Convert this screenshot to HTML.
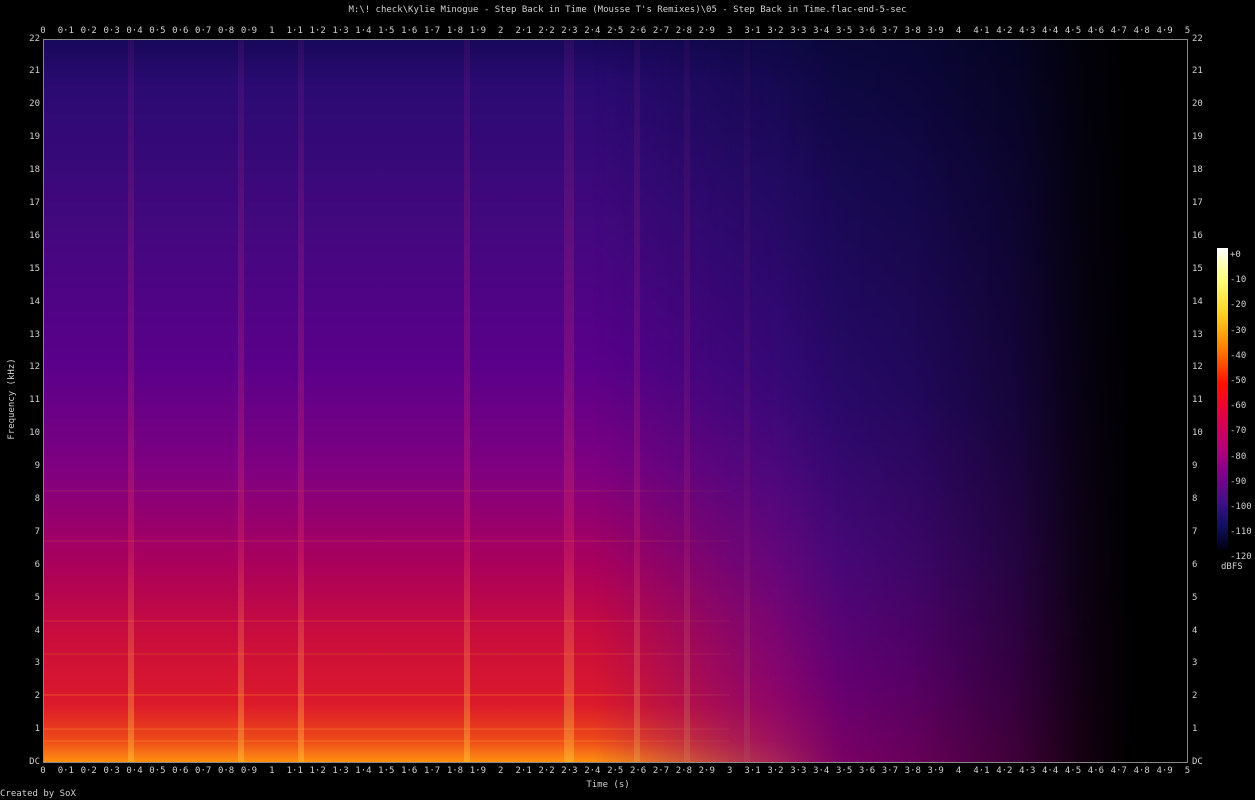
<!DOCTYPE html><html><head><style>
body{margin:0;width:1255px;height:800px;background:#000;position:relative;overflow:hidden;font-family:"DejaVu Sans Mono","Liberation Mono",monospace;font-size:9px;color:#d0d0d0}
.a{position:absolute}
#plot{left:43px;top:39px;width:1145px;height:724px;border:1px solid #888;box-sizing:border-box;overflow:hidden;
background:linear-gradient(to bottom,#18085a 0%,#2a0a72 6%,#42087e 25%,#5a008a 45%,#800080 60%,#a8005e 72%,#c80c3e 82%,#dc1a2a 92%,#ee4a1a 97%,#ff9010 100%)}
.right{left:0;top:0;width:100%;height:100%;
background:linear-gradient(to bottom,#0c0840 0%,#1a0a5a 20%,#2e0a74 50%,#500884 72%,#700080 88%,#8a0070 100%);
-webkit-mask-image:linear-gradient(to right,transparent 48%,rgba(0,0,0,.6) 60%,#000 70%);mask-image:linear-gradient(to right,transparent 48%,rgba(0,0,0,.6) 60%,#000 70%)}
.fade{left:0;top:0;width:100%;height:100%;background:linear-gradient(to right,rgba(0,0,0,0) 0%,rgba(0,0,0,0) 64%,rgba(0,0,20,.25) 76%,rgba(0,0,10,.55) 85%,rgba(0,0,0,.85) 91%,#000 95%,#000 100%)}
.col{top:0;height:100%;width:6px;background:linear-gradient(to bottom,rgba(200,40,160,.1),rgba(255,60,100,.25) 70%,rgba(255,200,60,.4));}
.hb{left:0;width:60%;height:2px;background:rgba(255,160,40,.2)}
#top,#bot{left:31.5px;display:flex;width:1170px}
#top span,#bot span{width:22.9px;flex:none;text-align:center}
#lft,#rgt{top:22.5px;display:flex;flex-direction:column}
#lft span,#rgt span{height:32.9px;line-height:32.9px;flex:none}
#lft{left:0;width:40px;text-align:right}
#rgt{left:1192px;width:30px}
#cb{left:1217px;top:248px;width:11px;height:302px;background:linear-gradient(to bottom,#fff 0%,#ffff80 10%,#ffd020 22%,#ff8000 33%,#ff1000 45%,#e0004a 56%,#b0007a 67%,#80008c 75%,#40108a 84%,#101060 92%,#000010 100%)}
</style></head><body>
<div class="a" style="left:0;width:1255px;top:5px;text-align:center">M:\! check\Kylie Minogue - Step Back in Time (Mousse T's Remixes)\05 - Step Back in Time.flac-end-5-sec</div>
<div class="a" id="plot">
<div class="a col" style="left:84px"></div><div class="a col" style="left:194px"></div><div class="a col" style="left:254px"></div><div class="a col" style="left:420px"></div><div class="a col" style="left:520px;width:10px"></div><div class="a col" style="left:590px"></div><div class="a col" style="left:640px"></div><div class="a col" style="left:700px"></div><div class="a col" style="left:865px"></div>
<div class="a hb" style="top:654px"></div><div class="a hb" style="top:688px"></div><div class="a hb" style="top:700px"></div><div class="a hb" style="top:613px;opacity:.6"></div><div class="a hb" style="top:580px;opacity:.6"></div><div class="a hb" style="top:500px;opacity:.5"></div><div class="a hb" style="top:450px;opacity:.4"></div>
<div class="a right"></div>
<div class="a fade"></div>
</div>
<div class="a" id="top" style="top:26px"><span>0</span><span>0·1</span><span>0·2</span><span>0·3</span><span>0·4</span><span>0·5</span><span>0·6</span><span>0·7</span><span>0·8</span><span>0·9</span><span>1</span><span>1·1</span><span>1·2</span><span>1·3</span><span>1·4</span><span>1·5</span><span>1·6</span><span>1·7</span><span>1·8</span><span>1·9</span><span>2</span><span>2·1</span><span>2·2</span><span>2·3</span><span>2·4</span><span>2·5</span><span>2·6</span><span>2·7</span><span>2·8</span><span>2·9</span><span>3</span><span>3·1</span><span>3·2</span><span>3·3</span><span>3·4</span><span>3·5</span><span>3·6</span><span>3·7</span><span>3·8</span><span>3·9</span><span>4</span><span>4·1</span><span>4·2</span><span>4·3</span><span>4·4</span><span>4·5</span><span>4·6</span><span>4·7</span><span>4·8</span><span>4·9</span><span>5</span></div>
<div class="a" id="bot" style="top:766px"><span>0</span><span>0·1</span><span>0·2</span><span>0·3</span><span>0·4</span><span>0·5</span><span>0·6</span><span>0·7</span><span>0·8</span><span>0·9</span><span>1</span><span>1·1</span><span>1·2</span><span>1·3</span><span>1·4</span><span>1·5</span><span>1·6</span><span>1·7</span><span>1·8</span><span>1·9</span><span>2</span><span>2·1</span><span>2·2</span><span>2·3</span><span>2·4</span><span>2·5</span><span>2·6</span><span>2·7</span><span>2·8</span><span>2·9</span><span>3</span><span>3·1</span><span>3·2</span><span>3·3</span><span>3·4</span><span>3·5</span><span>3·6</span><span>3·7</span><span>3·8</span><span>3·9</span><span>4</span><span>4·1</span><span>4·2</span><span>4·3</span><span>4·4</span><span>4·5</span><span>4·6</span><span>4·7</span><span>4·8</span><span>4·9</span><span>5</span></div>
<div class="a" id="lft"><span>22</span><span>21</span><span>20</span><span>19</span><span>18</span><span>17</span><span>16</span><span>15</span><span>14</span><span>13</span><span>12</span><span>11</span><span>10</span><span>9</span><span>8</span><span>7</span><span>6</span><span>5</span><span>4</span><span>3</span><span>2</span><span>1</span><span>DC</span></div>
<div class="a" id="rgt"><span>22</span><span>21</span><span>20</span><span>19</span><span>18</span><span>17</span><span>16</span><span>15</span><span>14</span><span>13</span><span>12</span><span>11</span><span>10</span><span>9</span><span>8</span><span>7</span><span>6</span><span>5</span><span>4</span><span>3</span><span>2</span><span>1</span><span>DC</span></div>
<div class="a" style="left:-38px;top:394px;width:100px;text-align:center;white-space:nowrap;transform:rotate(-90deg)">Frequency (kHz)</div>
<div class="a" style="left:0;width:1216px;top:780px;text-align:center">Time (s)</div>
<div class="a" style="left:0;top:789px">Created by SoX</div>
<div class="a" id="cb"></div>
<div class="a" style="left:1230px;top:243px;line-height:25.2px">+0<br>-10<br>-20<br>-30<br>-40<br>-50<br>-60<br>-70<br>-80<br>-90<br>-100<br>-110<br>-120</div>
<div class="a" style="left:1221px;top:562px">dBFS</div>
</body></html>
